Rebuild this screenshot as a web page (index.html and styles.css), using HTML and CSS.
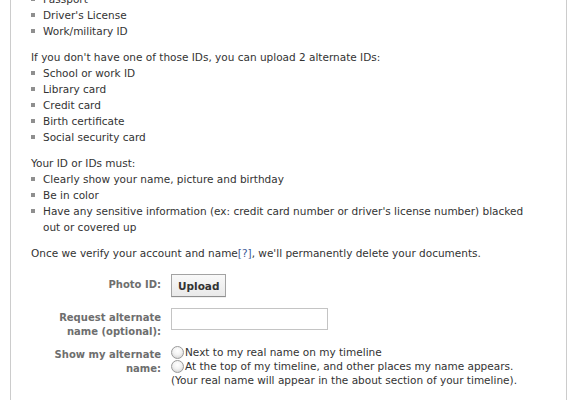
FILE: index.html
```html
<!DOCTYPE html>
<html lang="en">
<head>
<meta charset="utf-8">
<title>Confirm your name</title>
<link rel="stylesheet" href="styles.css">
</head>
<body>
<div class="box">
  <ul class="bullets">
    <li>Passport</li>
    <li>Driver's License</li>
    <li>Work/military ID</li>
  </ul>
  <p class="para">If you don't have one of those IDs, you can upload 2 alternate IDs:</p>
  <ul class="bullets">
    <li>School or work ID</li>
    <li>Library card</li>
    <li>Credit card</li>
    <li>Birth certificate</li>
    <li>Social security card</li>
  </ul>
  <p class="para">Your ID or IDs must:</p>
  <ul class="bullets">
    <li>Clearly show your name, picture and birthday</li>
    <li>Be in color</li>
    <li>Have any sensitive information (ex: credit card number or driver's license number) blacked out or covered up</li>
  </ul>
  <p class="para">Once we verify your account and name<a class="help" href="#">[?]</a>, we'll permanently delete your documents.</p>

  <form class="form">
    <div class="row row-upload">
      <label class="label">Photo ID:</label>
      <div class="control"><button type="button" class="btn">Upload</button></div>
    </div>
    <div class="row row-name">
      <label class="label label-pad" for="alt">Request alternate name (optional):</label>
      <div class="control"><input id="alt" class="text" type="text"></div>
    </div>
    <div class="row">
      <label class="label label-pad">Show my alternate name:</label>
      <div class="control options">
        <label class="opt"><input type="radio" name="show" class="radio">Next to my real name on my timeline</label>
        <label class="opt"><input type="radio" name="show" class="radio">At the top of my timeline, and other places my name appears.</label>
        <span class="note">(Your real name will appear in the about section of your timeline).</span>
      </div>
    </div>
  </form>
</div>
</body>
</html>
```
FILE: styles.css
```css
html, body {
  margin: 0;
  padding: 0;
  background: #fff;
}
body {
  font-family: "DejaVu Sans", "Liberation Sans", sans-serif;
  font-size: 10.5px;
  line-height: 16px;
  color: #333;
  overflow: hidden;
}
.box {
  margin: -9px 0 0 10px;
  width: 505px;
  padding: 0 30px 40px 20px;
  border: 1px solid #ccc;
  border-top: none;
}
.bullets {
  list-style: none;
  margin: 0;
  padding: 0 0 0 12px;
}
.bullets li {
  text-indent: -12px;
}
.bullets li::before {
  content: "";
  display: inline-block;
  width: 4px;
  height: 4px;
  background: #8f8f8f;
  margin-right: 8px;
  vertical-align: 2px;
}
.para {
  margin: 10px 0 0;
}
.help {
  color: #3b5998;
  text-decoration: none;
}
.form {
  margin-top: 13px;
}
.row {
  display: flex;
  align-items: flex-start;
}
.row-upload {
  margin-bottom: 11px;
}
.row-name {
  margin-bottom: 6px;
}
.label {
  width: 130px;
  flex: none;
  margin-right: 10px;
  text-align: right;
  font-weight: bold;
  font-size: 10px;
  line-height: 14px;
  color: #6e6e6e;
  padding-top: 4px;
}
.label-pad {
  padding-top: 3px;
}
.control {
  flex: 1;
}
.btn {
  height: 23px;
  padding: 0 6px;
  margin: 0;
  font-family: inherit;
  font-size: 10.5px;
  font-weight: bold;
  color: #333;
  background: linear-gradient(#f9f9f9, #e9e9e9);
  border: 1px solid #a3a3a3;
  border-bottom-color: #8f8f8f;
  box-shadow: 0 1px 0 rgba(0, 0, 0, 0.06);
  display: block;
}
.text {
  display: block;
  box-sizing: border-box;
  width: 157px;
  height: 22px;
  margin: 0;
  border: 1px solid #c4c4c4;
  background: #fff;
}
.options {
  display: flex;
  flex-direction: column;
  line-height: 14px;
}
.opt {
  display: flex;
  align-items: center;
}
.radio {
  appearance: none;
  -webkit-appearance: none;
  width: 13px;
  height: 13px;
  margin: 0 1px 0 0;
  border: 1px solid #9a9a9a;
  border-radius: 50%;
  background: radial-gradient(circle at 50% 35%, #ffffff 0%, #f2f2f2 45%, #c9c9c9 100%);
  box-sizing: border-box;
  flex: none;
}
```
